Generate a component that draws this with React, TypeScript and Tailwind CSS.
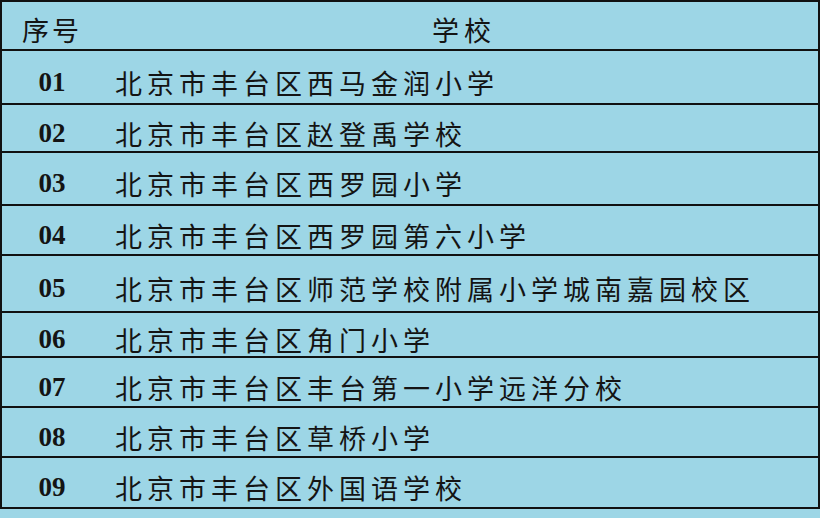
import React from "react";

const rows: { no: string; name: string; h: string }[] = [
  { no: "01", name: "北京市丰台区西马金润小学", h: "h-[54px]" },
  { no: "02", name: "北京市丰台区赵登禹学校", h: "h-[48px]" },
  { no: "03", name: "北京市丰台区西罗园小学", h: "h-[53px]" },
  { no: "04", name: "北京市丰台区西罗园第六小学", h: "h-[50px]" },
  { no: "05", name: "北京市丰台区师范学校附属小学城南嘉园校区", h: "h-[57px]" },
  { no: "06", name: "北京市丰台区角门小学", h: "h-[45px]" },
  { no: "07", name: "北京市丰台区丰台第一小学远洋分校", h: "h-[50px]" },
  { no: "08", name: "北京市丰台区草桥小学", h: "h-[50px]" },
  { no: "09", name: "北京市丰台区外国语学校", h: "h-[51px]" },
];

const cjk = "font-['Noto_Sans_CJK_SC',sans-serif]";

export default function App() {
  return (
    <div className="w-[820px] h-[518px] bg-[#9dd6e6] overflow-hidden text-[#141414]">
      <div className="w-[820px] border-t-2 border-x-2 border-[#111]">
        <div className="flex h-[49px] border-b-2 border-[#111] items-center pt-[8px]">
          <div className={`w-[100px] text-center text-[27px] leading-none ${cjk} tracking-[3px]`}>序号</div>
          <div className={`flex-1 text-center text-[27px] leading-none ${cjk} tracking-[5px] pl-[8px]`}>学校</div>
        </div>
        {rows.map((r) => (
          <div key={r.no} className={`flex ${r.h} border-b-2 border-[#111] items-center pt-[10px]`}>
            <div className="w-[100px] text-center font-['Liberation_Serif',serif] font-bold text-[27px] leading-none">
              {r.no}
            </div>
            <div className={`pl-[13px] text-[27px] leading-none ${cjk} tracking-[5px] whitespace-nowrap`}>
              {r.name}
            </div>
          </div>
        ))}
      </div>
    </div>
  );
}
